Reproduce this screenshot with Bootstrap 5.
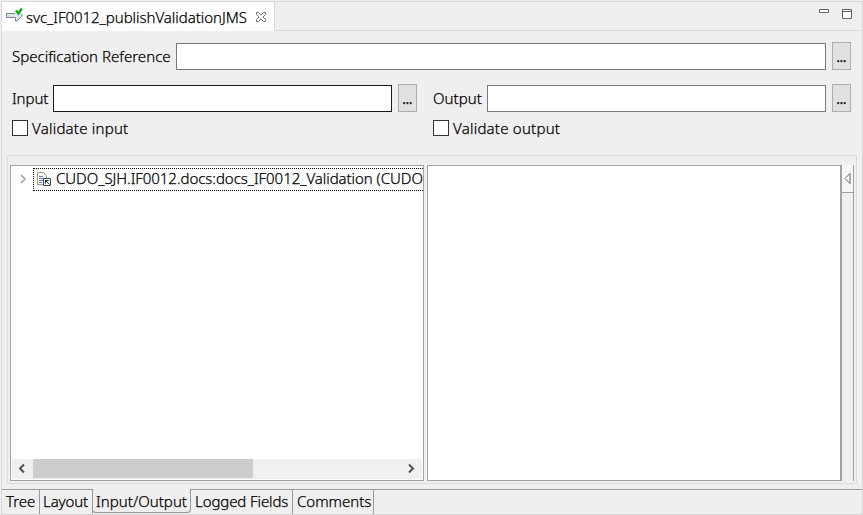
<!DOCTYPE html>
<html lang="en">
<head>
<meta charset="utf-8">
<meta name="viewport" content="width=device-width, initial-scale=1">
<title>svc_IF0012_publishValidationJMS</title>
<link href="https://cdn.jsdelivr.net/npm/bootstrap@5.3.0/dist/css/bootstrap.min.css" rel="stylesheet">
<style>
body{font:350 15px/20px "Noto Sans","Open Sans",sans-serif;color:#000;-webkit-text-stroke:.25px #000;background:#f0f0f0;width:863px;height:515px;overflow:hidden;padding:1px 0 0 1px}
svg{display:block;flex:none}
.editor{width:862px;height:514px;border:1px solid #d6d6d6;background:#efefef}
.tabstrip{height:29px;flex:none}
.tab-on{width:273px;background:#fff;border-right:1px solid #d9d9d9;padding:1px 0 0 4px}
.tab-rest{border-bottom:1px solid #d9d9d9;padding:7px 7px 0 0}
.lbl{white-space:nowrap;flex:none}
.l-title{width:224px;letter-spacing:-.04px;padding:4px 0 0 3px}
.l-spec{width:164px;letter-spacing:.02px}
.l-in{width:41px;letter-spacing:-.05px}
.l-out{width:54px;letter-spacing:.05px}
.l-chk{letter-spacing:.23px}
.fieldbox{height:27px;border:1px solid #7a7a7a;border-radius:0;padding:0 4px;background:#fff;font-size:15px;min-height:0}
.fieldbox.strong-edge{border-color:#1a1a1a}
.fieldbox:focus{box-shadow:none}
.dots{width:19px;height:28px;border:1px solid #adadad;border-radius:0;background:#e1e1e1;margin-left:6px;padding:0;flex:none;font-size:12px;font-weight:500;line-height:30px;color:#000}
.formarea{padding:11px 11px 0 10px;flex:none;height:124px}
.row-spec{height:28px}
.row-io{height:28px;margin-top:14px}
.row-chk{height:16px;margin-top:8px}
.half{width:405px}
.half+.half{width:418px;margin-left:16px}
.form-check-input.box{width:16px;height:16px;border:1px solid #333;border-radius:0!important;margin:0 4px 0 0;background:#fff;flex:none}
.group-frame{margin:0 5px 0 5px;height:329px;border:1px solid #dcdcdc;padding:9px 2px 2px 2px;flex:none}
.pane{width:414px;height:316px;border:1px solid #a0a4aa;background:#fff;flex:none}
.tree-row{height:24px;margin-top:1px;padding-left:9px}
.focus-item{height:23px;margin-left:5px;border:1px dotted #000;border-right:0;padding-left:3px}
.l-tree{letter-spacing:-.05px;margin:-2px 0 0 5px}
.hscroll{height:20px;margin:0 1px 1px 1px;background:#f0f0f0;padding-bottom:1px}
.thumb{width:220px;background:#cdcdcd}
.drawer{width:13px;height:316px;border:solid #a0a0a0;border-width:0 1px}
.drawer-btn{height:28px;background:#f7f7f7;border-bottom:1px solid #a0a0a0;padding-left:2px}
.pages{margin-top:5px;height:24px;border-top:1px solid #999;flex:none}
.page{border-right:1px solid #999;height:24px;padding:1px 0 0 4px;white-space:nowrap;letter-spacing:-.1px}
.page:first-child,.page:last-child{letter-spacing:0}
.page-on{background:#efefef;margin-top:-1px;padding-top:2px;height:24px;border:1px solid #999;border-top:0;border-radius:0 0 4px 4px;margin-left:-1px;padding-left:3px;letter-spacing:.05px}
.page-tight{padding-left:3px}
</style>
<script src="https://cdn.jsdelivr.net/npm/bootstrap@5.3.0/dist/js/bootstrap.bundle.min.js"></script>
</head>
<body>
<main class="editor d-flex flex-column">
  <header class="tabstrip d-flex">
    <div class="tab-on d-flex flex-shrink-0">
      <svg width="17" height="22" viewBox="0 0 17 22"><path d="M.5 10.500h9v-3.500h1.500l5 5v1l-5 5h-1.500v-3.500h-9z" fill="#dce6ee" stroke="#75828f"/><path d="M9 6h7v5H9z" fill="#fff" opacity=".8"/><path d="M10 7.500l2.500 3L15.800 5.500" fill="none" stroke="#12b012" stroke-width="2.500"/></svg>
      <div class="lbl l-title">svc_IF0012_publishValidationJMS</div>
      <svg class="ms-2 mt-2" width="12" height="12" viewBox="0 0 12 12"><path d="M1.500 1.500h2L6 4l2.500-2.500h2v2L8 6l2.500 2.500v2h-2L6 8l-2.500 2.500h-2v-2L4 6 1.500 3.500z" fill="#fff" stroke="#707070"/></svg>
    </div>
    <div class="tab-rest flex-grow-1 d-flex justify-content-end">
      <svg width="36" height="14" viewBox="0 0 36 14"><path d="M.5.5h9v3h-9zM23.500.5h9v9h-9zM23.500 2.500h9" fill="#fff" stroke="#606060"/></svg>
    </div>
  </header>
  <section class="formarea">
    <div class="row-spec d-flex align-items-center">
      <label class="lbl l-spec" for="spec">Specification Reference</label>
      <input id="spec" class="form-control fieldbox" type="text"><button class="btn dots" type="button">...</button>
    </div>
    <div class="row-io d-flex">
      <div class="half d-flex align-items-center"><label class="lbl l-in" for="inp">Input</label><input id="inp" class="form-control fieldbox strong-edge" type="text"><button class="btn dots" type="button">...</button></div>
      <div class="half d-flex align-items-center"><label class="lbl l-out" for="out">Output</label><input id="out" class="form-control fieldbox" type="text"><button class="btn dots" type="button">...</button></div>
    </div>
    <div class="row-chk d-flex">
      <div class="half d-flex align-items-center"><input class="form-check-input box" type="checkbox" id="vi"><label class="lbl l-chk" for="vi">Validate input</label></div>
      <div class="half d-flex align-items-center"><input class="form-check-input box" type="checkbox" id="vo"><label class="lbl l-chk" for="vo">Validate output</label></div>
    </div>
  </section>
  <section class="group-frame d-flex">
    <div class="pane d-flex flex-column">
      <div class="tree-row d-flex align-items-center">
        <svg width="8" height="12" viewBox="0 0 8 12"><path d="M1 2l4 4-4 4" fill="none" stroke="#a6a6a6" stroke-width="1.700"/></svg>
        <div class="focus-item d-flex align-items-center flex-grow-1">
          <svg width="14" height="15" viewBox="0 0 14 15"><path d="M.5.5h6l3 3v9h-9z" fill="#f4f7fb" stroke="#b29a5a"/><path d="M2 4.500h4M2 6.500h6M2 8.500h4M2 10.500h3" stroke="#5f86b8"/><path d="M6.500 6.500h7v7h-7z" fill="#fff" stroke="#2d4a72"/><path d="M8.500 11.500v-3h3M8.500 8.500l4 4" stroke="#10284a" fill="none"/></svg>
          <span class="lbl l-tree">CUDO_SJH.IF0012.docs:docs_IF0012_Validation (CUDO</span>
        </div>
      </div>
      <div class="hscroll mt-auto d-flex align-items-stretch">
        <svg width="21" height="19" viewBox="0 0 21 19"><path d="M12 5.500l-4 4 4 4" fill="none" stroke="#505050" stroke-width="2"/></svg>
        <div class="thumb"></div>
        <svg class="ms-auto" width="21" height="19" viewBox="0 0 21 19"><path d="M8 5.500l4 4-4 4" fill="none" stroke="#505050" stroke-width="2"/></svg>
      </div>
    </div>
    <div class="pane ms-auto"></div>
    <aside class="drawer"><div class="drawer-btn d-flex align-items-center"><svg width="7" height="11" viewBox="0 0 7 11"><path d="M6 .5v10L1 5.500z" fill="#fff" stroke="#606060"/></svg></div></aside>
  </section>
  <nav class="pages d-flex">
    <div class="page" style="width:38px">Tree</div>
    <div class="page page-tight" style="width:53px">Layout</div>
    <div class="page page-on" style="width:99px">Input/Output</div>
    <div class="page" style="width:102px">Logged Fields</div>
    <div class="page" style="width:81px">Comments</div>
  </nav>
</main>
</body>
</html>
